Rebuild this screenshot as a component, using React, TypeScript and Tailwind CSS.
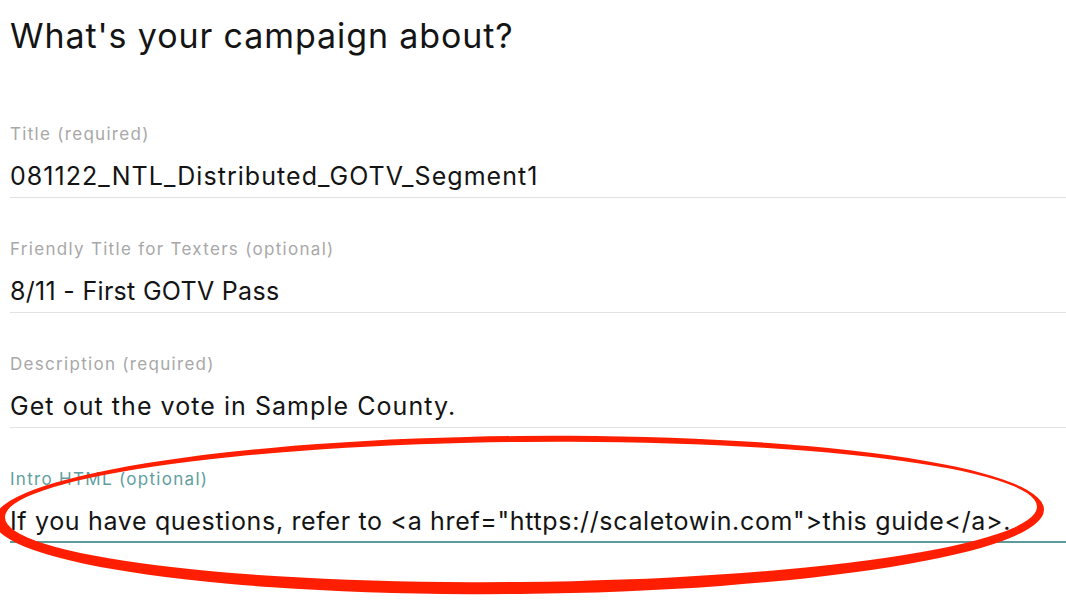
import React from "react";

const font = { fontFamily: '"Inter", "Liberation Sans", sans-serif' };

function Field({
  label,
  value,
  valueTracking,
  focused = false,
}: {
  label: string;
  value: string;
  valueTracking: string;
  focused?: boolean;
}) {
  return (
    <div
      className={
        focused
          ? "flex flex-col border-b-2 border-[#5b9b9c] pb-[4px]"
          : "flex flex-col border-b border-[#e2e2e2] pb-[5px]"
      }
    >
      <div
        className={
          focused
            ? "text-[17px] leading-[20px] tracking-[1.3px] text-[#5f9ea0]"
            : "text-[17px] leading-[20px] tracking-[1.3px] text-[#a8a8a8]"
        }
      >
        {label}
      </div>
      <div className={"mt-[16px] text-[25px] leading-[32px] text-[#141414] " + valueTracking}>
        {value}
      </div>
    </div>
  );
}

export default function App() {
  return (
    <div className="relative min-h-screen w-full overflow-hidden bg-white" style={font}>
      <div className="flex flex-col pl-[10px] pt-[16px]">
        <h1 className="text-[34px] leading-[40px] font-normal tracking-[0.9px] text-[#141414]">
          What's your campaign about?
        </h1>
        <div className="mt-[68px] flex flex-col gap-[41px]">
          <Field
            label="Title (required)"
            value="081122_NTL_Distributed_GOTV_Segment1"
            valueTracking="tracking-[1.05px]"
          />
          <Field
            label="Friendly Title for Texters (optional)"
            value="8/11 - First GOTV Pass"
            valueTracking="tracking-[0.3px]"
          />
          <Field
            label="Description (required)"
            value="Get out the vote in Sample County."
            valueTracking="tracking-[1.05px]"
          />
          <Field
            label="Intro HTML (optional)"
            value={'If you have questions, refer to <a href="https://scaletowin.com">this guide</a>.'}
            valueTracking="tracking-[0.66px]"
            focused
          />
        </div>
      </div>
      <svg
        className="pointer-events-none absolute left-0 top-0"
        width="1066"
        height="602"
        viewBox="0 0 1066 602"
      >
        <path
          fillRule="evenodd"
          fill="#ff1f00"
          transform="rotate(-0.6 519 515)"
          d="M -6 515 A 525 79 0 1 0 1044 515 A 525 79 0 1 0 -6 515 Z M 5 512 A 516 70 0 1 1 1037 512 A 516 70 0 1 1 5 512 Z"
        />
      </svg>
    </div>
  );
}
